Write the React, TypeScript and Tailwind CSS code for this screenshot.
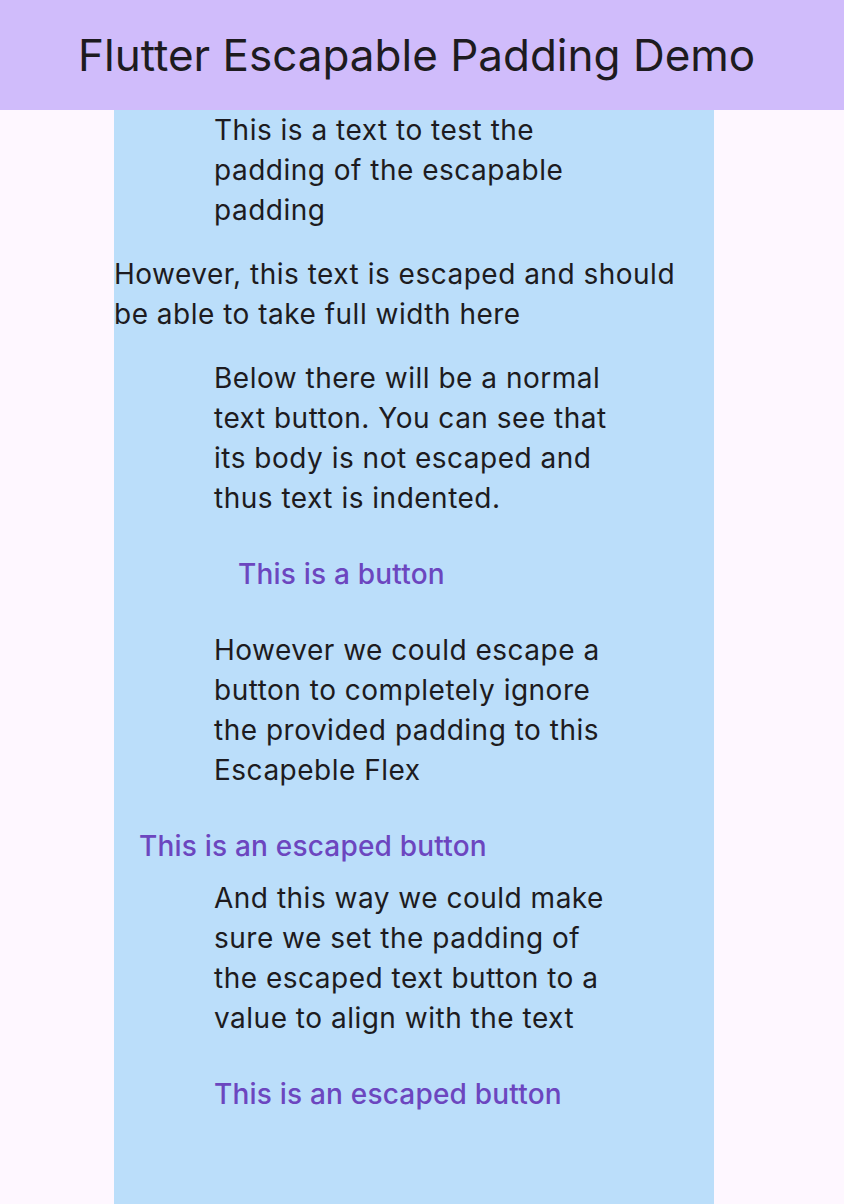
export default function App() {
  return (
    <div className="flex min-h-[1204px] flex-col bg-[#fef7ff] font-['Inter','Noto_Sans',sans-serif] text-[#1d1b20]">
      <header className="flex h-[110px] items-center bg-[#d0bcfb] pl-[78px]">
        <h1 className="text-[44px] leading-none font-normal">Flutter Escapable Padding Demo</h1>
      </header>

      <main className="ml-[114px] flex w-[600px] flex-1 flex-col bg-[#bbdefa] text-[28px] leading-[40px] tracking-[0.5px]">
        <p className="w-[500px] pl-[100px]">This is a text to test the padding of the escapable padding</p>

        <p className="mt-6 pr-[30px]">However, this text is escaped and should be able to take full width here</p>

        <p className="mt-6 w-[500px] pl-[100px]">
          Below there will be a normal text button. You can see that its body is not escaped and thus text is indented.
        </p>

        <div className="mt-6 pl-[100px]">
          <button className="flex h-16 items-center px-6 text-[28px] font-medium tracking-[0.2px] text-[#6c46bf]">
            This is a button
          </button>
        </div>

        <p className="mt-6 w-[500px] pl-[100px]">
          However we could escape a button to completely ignore the provided padding to this Escapeble Flex
        </p>

        <div className="mt-6">
          <button className="flex h-16 items-center px-[25px] text-[28px] font-medium tracking-[0.2px] text-[#6c46bf]">
            This is an escaped button
          </button>
        </div>

        <p className="w-[500px] pl-[100px]">
          And this way we could make sure we set the padding of the escaped text button to a value to align with the text
        </p>

        <div className="mt-6">
          <button className="flex h-16 items-center px-[100px] text-[28px] font-medium tracking-[0.2px] text-[#6c46bf]">
            This is an escaped button
          </button>
        </div>
      </main>
    </div>
  );
}
